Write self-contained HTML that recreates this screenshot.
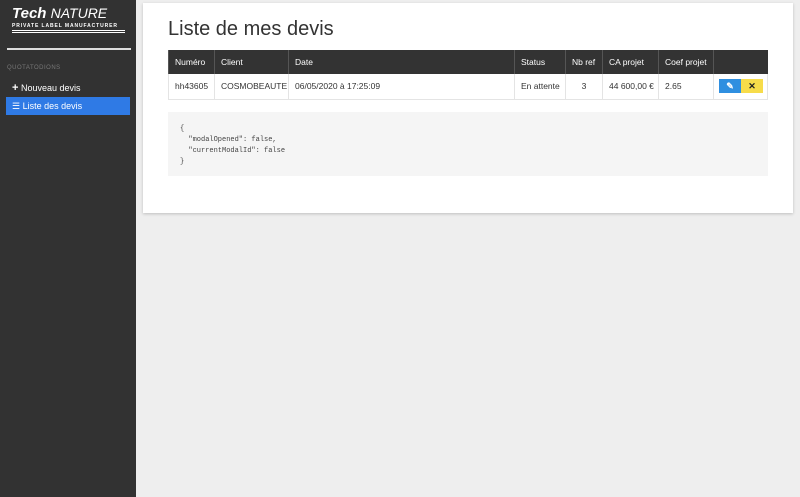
<!DOCTYPE html>
<html><head><meta charset="utf-8"><style>
*{box-sizing:border-box;margin:0;padding:0}
body{width:800px;height:497px;background:#eeeeee;font-family:"Liberation Sans",sans-serif;position:relative;overflow:hidden}
.side{position:absolute;left:0;top:0;width:136px;height:497px;background:#323232;color:#fff}
.card{position:absolute;left:143px;top:3px;width:650px;height:210px;background:#fff;box-shadow:0 1px 3px rgba(0,0,0,.2)}
h1{position:absolute;left:25px;top:15px;font-size:20px;font-weight:normal;color:#333}
table{position:absolute;left:25px;top:47px;width:600px;border-collapse:collapse;table-layout:fixed;font-size:8.5px;color:#333;white-space:nowrap}
th{background:#333;color:#fff;font-weight:normal;text-align:left;height:24px;padding:0 6px;border-left:1px solid #555;overflow:hidden}
td{height:25px;padding:0 6px;border-left:1px solid #e4e4e4;border-bottom:1px solid #e4e4e4;overflow:hidden}
td:last-child{border-right:1px solid #e4e4e4}
pre{position:absolute;left:25px;top:109px;width:600px;height:64px;background:#f5f5f5;font-family:"Liberation Mono",monospace;font-size:7px;line-height:11px;color:#444;padding:12px 12px}
.btn{display:inline-block;width:22px;height:14px;vertical-align:middle;text-align:center;line-height:14px;font-size:9px;font-weight:bold}
</style></head><body>
<div class="side">
<div style="position:absolute;left:12px;top:5px;font-size:15px;font-weight:bold;font-style:italic;letter-spacing:0">Tech <span style="font-weight:normal;font-size:14px">NATURE</span></div>
<div style="position:absolute;left:12px;top:23px;font-size:5px;font-weight:bold;letter-spacing:.9px">PRIVATE LABEL MANUFACTURER</div>
<div style="position:absolute;left:12px;top:30px;width:113px;height:1px;background:#fff"></div>
<div style="position:absolute;left:12px;top:32px;width:113px;height:1px;background:#fff"></div>
<div style="position:absolute;left:7px;top:48px;width:124px;height:2px;background:#ddd"></div>
<div style="position:absolute;left:7px;top:65px;font-size:6px;color:#777;letter-spacing:.5px">QUOTATODIONS</div>
<div style="position:absolute;left:12px;top:82px;font-size:9px"><b style="font-size:11px">+</b> Nouveau devis</div>
<div style="position:absolute;left:6px;top:97px;width:124px;height:18px;background:#2f7ae5;font-size:9px;padding:4px 6px">☰ Liste des devis</div>
</div>
<div class="card">
<h1>Liste de mes devis</h1>
<table>
<colgroup><col style="width:46px"><col style="width:74px"><col style="width:226px"><col style="width:51px"><col style="width:37px"><col style="width:56px"><col style="width:55px"><col style="width:54px"></colgroup>
<tr><th>Numéro</th><th>Client</th><th>Date</th><th>Status</th><th>Nb ref</th><th>CA projet</th><th>Coef projet</th><th></th></tr>
<tr><td>hh43605</td><td>COSMOBEAUTE</td><td>06/05/2020 à 17:25:09</td><td>En attente</td><td style="text-align:center">3</td><td>44 600,00 €</td><td>2.65</td><td style="padding:0 5px"><span class="btn" style="background:#2f8fe0;color:#fff">✎</span><span class="btn" style="background:#f7dc4a;color:#222">✕</span></td></tr>
</table>
<pre>{
  "modalOpened": false,
  "currentModalId": false
}</pre>
</div>
</body></html>
